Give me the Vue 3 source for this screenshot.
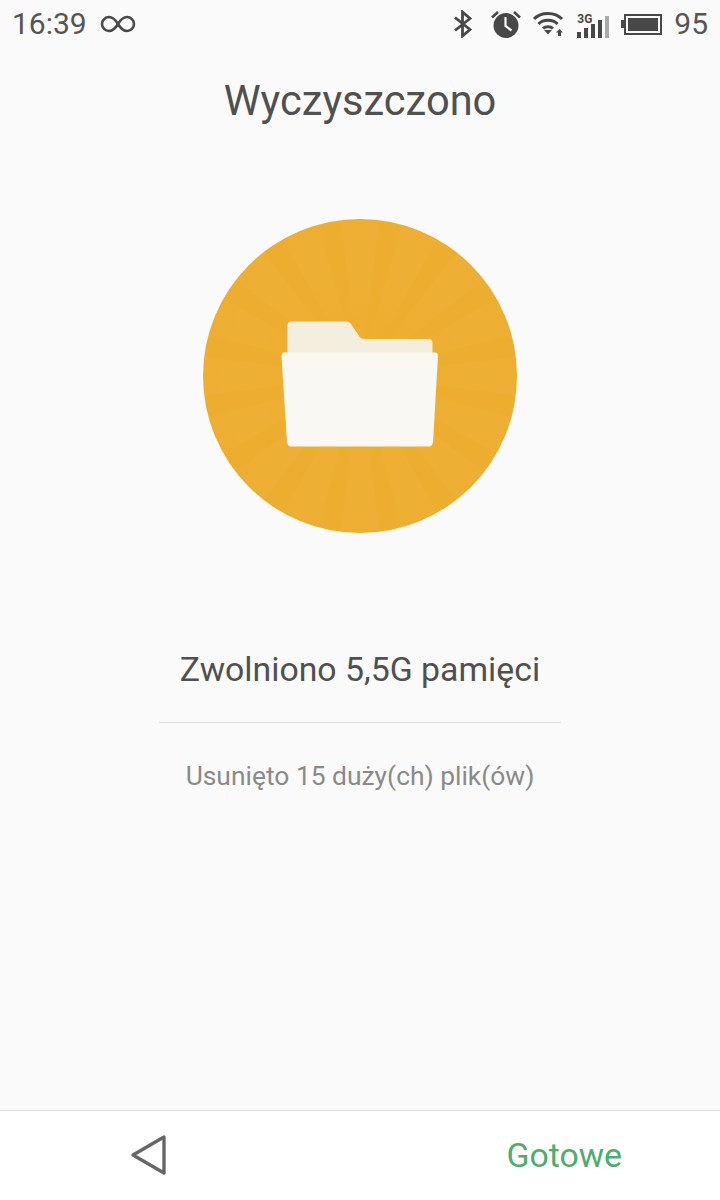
<template>
  <div class="screen">
    <div class="status">
      <div class="status-left">
        <span class="time">16:39</span>
        <svg class="infinity" width="36" height="18" viewBox="0 0 36 18">
          <path d="M18 9C15 4 12.500 2 9 2A7 7 0 0 0 9 16C12.500 16 15 14 18 9C21 4 23.500 2 27 2A7 7 0 0 1 27 16C23.500 16 21 14 18 9Z" fill="none" stroke="#4a4a4a" stroke-width="2.600" />
        </svg>
      </div>
      <div class="status-right">
        <svg class="bt" width="21" height="28" viewBox="0 0 21 28">
          <path d="M3 7.500L18 19.500L10.500 26V2L18 8.500L3 20.500" fill="none" stroke="#484848" stroke-width="2.800" />
        </svg>
        <svg class="alarm" width="30" height="28" viewBox="0 0 30 28">
          <path d="M1 7.500L7 2M29 7.500L23 2" stroke="#484848" stroke-width="2.600" fill="none" />
          <circle cx="15" cy="15.500" r="12.500" fill="#484848" />
          <path d="M14.500 7V16L20.500 20.500" stroke="#fafafa" stroke-width="2.200" fill="none" />
        </svg>
        <svg class="wifi" width="32" height="26" viewBox="0 0 32 26">
          <path d="M1 8C8 0.500 22 0.500 29 8M5.500 13C10 8 20 8 24.500 13M10 17.500C12.500 15 17.500 15 20 17.500" fill="none" stroke="#484848" stroke-width="3" />
          <path d="M11 19H19L15 23.500Z" fill="#484848" />
          <path d="M26.500 18L30 21.500H28V25H25V21.500H23Z" fill="#484848" />
        </svg>
        <div class="signal">
          <span class="net">3G</span>
          <div class="bars">
            <i v-for="h in barHeights" :key="h" :style="{ height: h + 'px' }" />
            <i class="bar-off" />
          </div>
        </div>
        <div class="battery"><div class="battery-fill" /></div>
        <span class="percent">95</span>
      </div>
    </div>

    <h1 class="title">Wyczyszczono</h1>

    <div class="badge">
      <svg width="314" height="314" viewBox="-157 -157 314 314">
        <defs>
          <radialGradient id="rayFade" gradientUnits="userSpaceOnUse" cx="0" cy="0" r="157">
            <stop offset="0.35" stop-color="#efb23f" stop-opacity="0.05" />
            <stop offset="0.7" stop-color="#efb23f" stop-opacity="0.3" />
            <stop offset="1" stop-color="#efb23f" stop-opacity="0.2" />
          </radialGradient>
        </defs>
        <circle r="157" fill="#edae30" />
        <polygon v-for="ray in rays" :key="ray" :points="ray" fill="url(#rayFade)" />
        <path d="M-72.500 -23V-50.500Q-72.500 -54.500 -68.500 -54.500H-14Q-10 -54.500 -8 -50.500L-1 -40Q1 -37 5 -37H68.500Q72.500 -37 72.500 -33V-23Z" fill="#f4eede" />
        <path d="M-75.500 -23.500H75Q78 -23.500 78 -20L73 66Q72.500 70.500 68.500 70.500H-68.500Q-72.500 70.500 -73 66L-78.500 -20Q-78.500 -23.500 -75.500 -23.500Z" fill="#f9f8f2" />
      </svg>
    </div>

    <p class="freed">Zwolniono 5,5G pamięci</p>
    <div class="divider" />
    <p class="removed">Usunięto 15 duży(ch) plik(ów)</p>

    <div class="footer">
      <svg class="back" width="38" height="44" viewBox="0 0 38 44">
        <path d="M34 3V39L3 21Z" fill="none" stroke="#666" stroke-width="3.400" stroke-linejoin="round" />
      </svg>
      <span class="done">Gotowe</span>
    </div>
  </div>
</template>

<script setup>
const barHeights = [6, 10, 14, 18]

// sunburst behind the folder, one wedge every 22.5 degrees
const rays = Array.from({ length: 16 }, (_, i) => {
  const mid = (i * 22.5 * Math.PI) / 180
  const half = (7 * Math.PI) / 180
  const r = 156
  const a = [mid - half, mid + half].map((t) => `${(r * Math.sin(t)).toFixed(1)},${(-r * Math.cos(t)).toFixed(1)}`)
  return `0,0 ${a[0]} ${a[1]}`
})
</script>

<style>
html,
body {
  margin: 0;
  background: #fafafa;
}
</style>

<style scoped>
.screen {
  width: 720px;
  height: 1200px;
  display: flex;
  flex-direction: column;
  align-items: center;
  background: #fafafa;
  font-family: Roboto, "Liberation Sans", sans-serif;
  overflow: hidden;
}

.status {
  width: 100%;
  height: 48px;
  box-sizing: border-box;
  padding: 0 12px;
  display: flex;
  justify-content: space-between;
  align-items: center;
  color: #555;
}

.status-left,
.status-right {
  display: flex;
  align-items: center;
}

.time,
.percent {
  font-size: 30px;
  line-height: 48px;
  font-weight: 400;
}

.infinity {
  margin-left: 13px;
}

.bt {
  margin-right: 18px;
}

.alarm {
  margin-right: 12px;
}

.wifi {
  margin-right: 12px;
}

.signal {
  position: relative;
  width: 33px;
  height: 24px;
  margin-top: 4px;
  margin-right: 14px;
}

.net {
  position: absolute;
  left: 0;
  top: 0;
  font-size: 12px;
  line-height: 10px;
  font-weight: 700;
  color: #484848;
}

.bars {
  position: absolute;
  left: 0;
  right: 0;
  bottom: 0;
  display: flex;
  align-items: flex-end;
  gap: 3px;
}

.bars i {
  width: 4px;
  background: #484848;
}

.bars .bar-off {
  height: 22px;
  background: #a8a8a8;
}

.battery {
  width: 38px;
  height: 21px;
  margin-right: 12px;
  box-sizing: border-box;
  border: 2.500px solid #484848;
  padding: 2px;
  position: relative;
}

.battery::before {
  content: "";
  position: absolute;
  left: -5px;
  top: 4px;
  width: 3px;
  height: 8px;
  background: #484848;
}

.battery-fill {
  height: 100%;
  background: #484848;
}

.title {
  margin: 26px 0 0;
  font-size: 41.600px;
  line-height: 54px;
  font-weight: 400;
  color: #505050;
}

.badge {
  margin-top: 91px;
  height: 314px;
}

.freed {
  margin: 113px 0 0;
  font-size: 33.800px;
  line-height: 48px;
  color: #505050;
}

.divider {
  width: 402px;
  height: 1px;
  margin-top: 28px;
  background: #dcdcdc;
}

.removed {
  margin: 35px 0 0;
  font-size: 26.400px;
  line-height: 36px;
  color: #8a8a8a;
}

.footer {
  margin-top: auto;
  width: 100%;
  height: 90px;
  box-sizing: border-box;
  padding: 0 98px 0 130px;
  display: flex;
  justify-content: space-between;
  align-items: center;
  background: #fff;
  border-top: 1px solid #dcdcdc;
}

.done {
  font-size: 33.800px;
  color: #4cae6e;
}
</style>
